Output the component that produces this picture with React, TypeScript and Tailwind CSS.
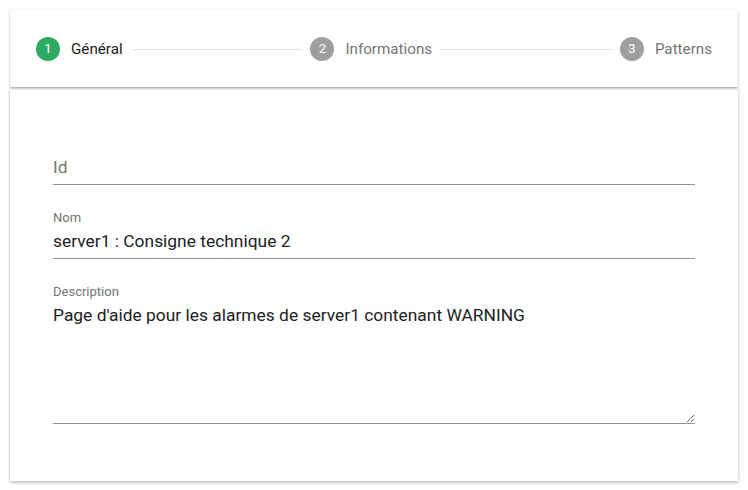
import { Fragment, useState } from 'react';

interface Step {
  num: number;
  label: string;
  active?: boolean;
}

const steps: Step[] = [
  { num: 1, label: 'Général', active: true },
  { num: 2, label: 'Informations' },
  { num: 3, label: 'Patterns' },
];

const Stepper = () => (
  <div className="relative z-10 flex h-[77px] items-center bg-white px-[26px] pt-px shadow-[0_2px_2px_rgba(0,0,0,0.22),0_0_3px_rgba(0,0,0,0.10)]">
    {steps.map((step, index) => (
      <Fragment key={step.num}>
        <div className="flex items-center">
          <div
            className={
              'flex h-6 w-6 items-center justify-center rounded-full text-[13px] text-white ' +
              (step.active ? 'bg-[#2daa62]' : 'bg-[#9e9e9e]')
            }
          >
            {step.num}
          </div>
          <span
            className={
              'ml-[11px] text-[15.2px] ' + (step.active ? 'text-[#212121]' : 'text-[#757575]')
            }
          >
            {step.label}
          </span>
        </div>
        {index < steps.length - 1 && <div className="mx-[9px] h-px flex-1 bg-[#e0e0e0]" />}
      </Fragment>
    ))}
  </div>
);

interface FieldProps {
  label: string;
  value: string;
  onChange: (v: string) => void;
}

const Field = ({ label, value, onChange }: FieldProps) => (
  <div className="flex flex-col">
    <label className="h-4 text-[13px] leading-4 text-[#757575]">{value ? label : ''}</label>
    <input
      value={value}
      placeholder={label}
      onChange={(e) => onChange(e.target.value)}
      className="mt-[5px] h-[28px] border-b border-[#949494] pb-[7px] text-[17.4px] leading-5 text-[#212121] outline-none placeholder:text-[#757575]"
    />
  </div>
);

const App = () => {
  const [id, setId] = useState('');
  const [nom, setNom] = useState('server1 : Consigne technique 2');
  const [description, setDescription] = useState(
    'Page d\'aide pour les alarmes de server1 contenant WARNING'
  );

  return (
    <div className="min-h-[490px] bg-white p-[10px] font-['Roboto',sans-serif]">
      <div className="flex flex-col">
        <Stepper />
        <div className="mt-px bg-white px-[43px] pt-[48px] pb-[57px] shadow-[0_2px_3px_rgba(0,0,0,0.22),0_0_3px_rgba(0,0,0,0.12)]">
          <div className="flex flex-col gap-[25px]">
            <Field label="Id" value={id} onChange={setId} />
            <Field label="Nom" value={nom} onChange={setNom} />
            <div className="flex flex-col">
              <label className="h-4 text-[13px] leading-4 text-[#757575]">Description</label>
              <textarea
                value={description}
                onChange={(e) => setDescription(e.target.value)}
                className="mt-[5px] h-[119px] border-b border-[#949494] text-[17.4px] leading-5 text-[#212121] outline-none"
              />
            </div>
          </div>
        </div>
      </div>
    </div>
  );
};

export default App;
